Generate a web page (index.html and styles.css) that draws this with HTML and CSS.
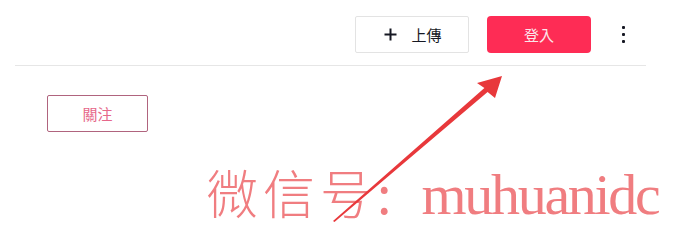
FILE: index.html
```html
<!DOCTYPE html>
<html lang="zh-Hant">
<head>
<meta charset="utf-8">
<link rel="stylesheet" href="styles.css">
</head>
<body>
<div class="page">
  <header class="topbar">
    <button class="btn-upload" type="button">
      <svg class="plus" width="13" height="13" viewBox="0 0 13 13"><path d="M6.5 0.5v12M0.5 6.5h12" stroke="#161823" stroke-width="2" fill="none"/></svg>
      <span>上傳</span>
    </button>
    <button class="btn-login" type="button">登入</button>
    <div class="kebab"><i></i><i></i><i></i></div>
  </header>
  <main class="content">
    <button class="btn-follow" type="button">關注</button>
  </main>
</div>
<div class="watermark"><span class="wm-cjk">微信号</span><span class="wm-colon">:</span><span class="wm-latin">muhuanidc</span></div>
<svg class="arrow" width="680" height="236" viewBox="0 0 680 236">
  <polygon points="333,221 484.4,88.1 477,83 502,76 495,98 487.6,91.9 334.5,222" fill="#e8383b"/>
</svg>
</body>
</html>
```

FILE: styles.css
```css
html, body {
  margin: 0;
  padding: 0;
  background: #ffffff;
}
body {
  width: 680px;
  height: 236px;
  position: relative;
  overflow: hidden;
  font-family: "Noto Sans CJK TC", "Noto Sans", sans-serif;
}
.page {
  margin-left: 15px;
  width: 631px;
}
.topbar {
  display: flex;
  justify-content: flex-end;
  align-items: flex-start;
  height: 66px;
  box-sizing: border-box;
  padding-top: 16px;
  padding-right: 11px;
  border-bottom: 1px solid #e6e6e6;
}
.btn-upload {
  width: 114px;
  height: 37px;
  box-sizing: border-box;
  border: 1px solid #e3e3e3;
  border-radius: 2px;
  background: #fff;
  display: flex;
  align-items: center;
  justify-content: center;
  gap: 14px;
  padding: 0 0 0 2px;
  font-family: inherit;
  font-size: 15px;
  color: #161823;
}
.btn-login {
  margin-left: 18px;
  width: 104px;
  height: 37px;
  border: none;
  border-radius: 4px;
  background: #fe2c55;
  color: #fbe6ea;
  font-family: inherit;
  font-size: 15px;
  padding: 0;
}
.kebab {
  margin-left: 20px;
  width: 24px;
  height: 37px;
  display: flex;
  flex-direction: column;
  align-items: center;
  justify-content: center;
  gap: 4px;
}
.kebab i {
  display: block;
  width: 3px;
  height: 3px;
  background: #161823;
  border-radius: 1px;
}
.content {
  padding: 29px 0 0 32px;
}
.btn-follow {
  width: 101px;
  height: 37px;
  box-sizing: border-box;
  border: 1px solid #b0647e;
  border-radius: 2px;
  background: #fff;
  color: #e6678a;
  font-family: inherit;
  font-size: 15px;
  padding: 0;
}
.watermark {
  position: absolute;
  left: 206px;
  top: 166px;
  white-space: nowrap;
  color: #f07d80;
  line-height: 1;
}
.wm-cjk,
.wm-colon {
  font-family: "Noto Sans CJK SC", sans-serif;
  font-size: 52px;
  font-weight: 300;
  letter-spacing: 5px;
}
.wm-colon {
  letter-spacing: 0;
  font-weight: 400;
}
.wm-latin {
  margin-left: 30px;
  font-family: "Liberation Serif", serif;
  font-size: 58px;
  letter-spacing: -2.3px;
}
.arrow {
  position: absolute;
  left: 0;
  top: 0;
}
```
